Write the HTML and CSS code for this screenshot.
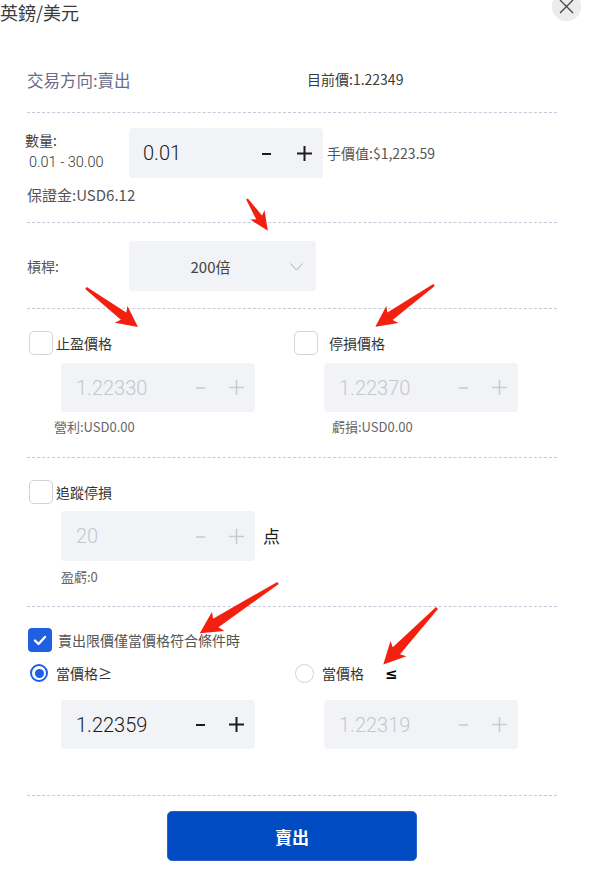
FILE: index.html
```html
<!DOCTYPE html>
<html lang="zh-Hant">
<head>
<meta charset="utf-8">
<title>英鎊/美元</title>
<link rel="stylesheet" href="styles.css">
</head>
<body>
<div class="page">
  <header class="head">
    <div class="title">英鎊/美元</div>
    <div class="close">
      <svg width="29" height="29" viewBox="0 0 29 29"><path d="M8 8 L21 21 M21 8 L8 21" stroke="#444" stroke-width="1.3" fill="none"/></svg>
    </div>
  </header>

  <div class="content">
    <section class="sec sec-dir">
      <div class="dir">交易方向:賣出</div>
      <div class="cur">目前價:1.22349</div>
    </section>

    <section class="sec sec-qty">
      <div class="qty-row">
        <div class="qty-label">
          <div class="ql1">數量:</div>
          <div class="ql2">0.01 - 30.00</div>
        </div>
        <div class="stepper qty">
          <span class="num">0.01</span>
          <svg class="minus" width="9" height="15" viewBox="0 0 9 15"><path d="M0 8 H9" stroke="currentColor" stroke-width="2"/></svg>
          <svg class="plus" width="15" height="15" viewBox="0 0 15 15"><path d="M0 7.5 H15 M7.5 0 V15" stroke="currentColor" stroke-width="2"/></svg>
        </div>
        <div class="value">手價值:$1,223.59</div>
      </div>
      <div class="margin">保證金:USD6.12</div>
    </section>

    <section class="sec sec-lev">
      <div class="lev-label">槓桿:</div>
      <div class="select">
        <span class="sel-text">200倍</span>
        <svg class="chev" width="13" height="8" viewBox="0 0 13 8"><path d="M0.5 0.5 L6.5 7 L12.5 0.5" stroke="#a9adb4" stroke-width="1" fill="none"/></svg>
      </div>
    </section>

    <section class="sec sec-tpsl">
      <div class="col col-tp">
        <div class="check-row">
          <span class="box"></span><span class="cb-label">止盈價格</span>
        </div>
        <div class="stepper disabled">
          <span class="num">1.22330</span>
          <svg class="minus" width="9" height="15" viewBox="0 0 9 15"><path d="M0 8 H9" stroke="currentColor" stroke-width="1.5"/></svg>
          <svg class="plus" width="15" height="15" viewBox="0 0 15 15"><path d="M0 7.5 H15 M7.5 0 V15" stroke="currentColor" stroke-width="1.5"/></svg>
        </div>
        <div class="note">營利:USD0.00</div>
      </div>
      <div class="col col-sl">
        <div class="check-row">
          <span class="box"></span><span class="cb-label">停損價格</span>
        </div>
        <div class="stepper disabled">
          <span class="num">1.22370</span>
          <svg class="minus" width="9" height="15" viewBox="0 0 9 15"><path d="M0 8 H9" stroke="currentColor" stroke-width="1.5"/></svg>
          <svg class="plus" width="15" height="15" viewBox="0 0 15 15"><path d="M0 7.5 H15 M7.5 0 V15" stroke="currentColor" stroke-width="1.5"/></svg>
        </div>
        <div class="note">虧損:USD0.00</div>
      </div>
    </section>

    <section class="sec sec-trail">
      <div class="check-row">
        <span class="box"></span><span class="cb-label">追蹤停損</span>
      </div>
      <div class="trail-row">
        <div class="stepper disabled">
          <span class="num">20</span>
          <svg class="minus" width="9" height="15" viewBox="0 0 9 15"><path d="M0 8 H9" stroke="currentColor" stroke-width="1.5"/></svg>
          <svg class="plus" width="15" height="15" viewBox="0 0 15 15"><path d="M0 7.5 H15 M7.5 0 V15" stroke="currentColor" stroke-width="1.5"/></svg>
        </div>
        <span class="unit">点</span>
      </div>
      <div class="note">盈虧:0</div>
    </section>

    <section class="sec sec-cond">
      <div class="check-row">
        <span class="box checked">
          <svg width="24" height="24" viewBox="0 0 24 24"><path d="M7 12.5 L10.5 16 L17 9" stroke="#fff" stroke-width="2.4" fill="none" stroke-linecap="round" stroke-linejoin="round"/></svg>
        </span>
        <span class="cb-label cond-label">賣出限價僅當價格符合條件時</span>
      </div>
      <div class="radio-grid">
        <div class="radio-cell r1">
          <span class="radio on"><span class="dot"></span></span>
          <span class="r-label">當價格≥</span>
        </div>
        <div class="radio-cell r2">
          <span class="radio"></span>
          <span class="r-label">當價格</span>
          <span class="le">≤</span>
        </div>
      </div>
      <div class="cond-inputs">
        <div class="stepper active">
          <span class="num">1.22359</span>
          <svg class="minus" width="9" height="15" viewBox="0 0 9 15"><path d="M0 8 H9" stroke="currentColor" stroke-width="2"/></svg>
          <svg class="plus" width="15" height="15" viewBox="0 0 15 15"><path d="M0 7.5 H15 M7.5 0 V15" stroke="currentColor" stroke-width="2"/></svg>
        </div>
        <div class="stepper disabled">
          <span class="num">1.22319</span>
          <svg class="minus" width="9" height="15" viewBox="0 0 9 15"><path d="M0 8 H9" stroke="currentColor" stroke-width="1.5"/></svg>
          <svg class="plus" width="15" height="15" viewBox="0 0 15 15"><path d="M0 7.5 H15 M7.5 0 V15" stroke="currentColor" stroke-width="1.5"/></svg>
        </div>
      </div>
    </section>

    <div class="btn-wrap">
      <button class="sell">賣出</button>
    </div>
  </div>
</div>

<svg class="arrows" width="592" height="879" viewBox="0 0 592 879">
  <g fill="#f4200f">
    <polygon transform="translate(247 199) rotate(56.7)" points="0,-1 22,-3.5 19,-8.5 38,0 19,8.5 22,3.5 0,1"/>
    <polygon transform="translate(86 288) rotate(36.9)" points="0,-1.3 47,-4.5 44,-10.5 65,0 44,10.5 47,4.5 0,1.3"/>
    <polygon transform="translate(434 285) rotate(144.6)" points="0,-1.3 54,-4.5 51,-10.5 72,0 51,10.5 54,4.5 0,1.3"/>
    <polygon transform="translate(278 583) rotate(147.3)" points="0,-1.3 74,-5 71,-11.5 93,0 71,11.5 74,5 0,1.3"/>
    <polygon transform="translate(437 608) rotate(133.5)" points="0,-1.3 59,-5 56,-11 78,0 56,11 59,5 0,1.3"/>
  </g>
</svg>
</body>
</html>
```

FILE: styles.css
```css
html, body {
  margin: 0;
  padding: 0;
  background: #fff;
  overflow: hidden;
}
body {
  position: relative;
  width: 592px;
  height: 879px;
  font-family: "Noto Sans CJK TC", "Noto Sans", sans-serif;
  color: #333;
}
.page {
  width: 592px;
}
.head {
  height: 44px;
  display: flex;
  justify-content: space-between;
  align-items: flex-start;
}
.title {
  font-size: 18px;
  line-height: 24px;
  color: #3a3a3a;
}
.close {
  width: 29px;
  height: 29px;
  margin-top: -8px;
  margin-right: 11px;
  border-radius: 50%;
  background: #ececec;
  box-shadow: 0 0 1px rgba(0,0,0,0.06);
}
.close svg { display: block; }

.content {
  padding: 0 35px 0 27px;
}
.sec {
  border-bottom: 1px dashed #c8cadc;
}

/* direction */
.sec-dir {
  display: grid;
  grid-template-columns: 280px 1fr;
  align-items: center;
  padding: 26px 0 22px;
  height: 20px;
}
.dir {
  font-size: 16.5px;
  line-height: 20px;
  color: #6c6a8c;
}
.cur {
  font-size: 14px;
  line-height: 20px;
  color: #3b3b3b;
  margin-top: -2px;
}

/* quantity */
.sec-qty {
  padding: 15px 0 17px;
}
.qty-row {
  display: flex;
  align-items: center;
  height: 50px;
}
.qty-label {
  width: 102px;
  align-self: flex-start;
}
.ql1 {
  margin-top: 2px;
  margin-left: -2px;
  font-size: 14px;
  line-height: 20px;
  color: #444;
}
.ql2 {
  margin-top: 3px;
  margin-left: 2px;
  font-family: Roboto, "Liberation Sans", sans-serif;
  font-weight: 300;
  font-size: 14.5px;
  line-height: 20px;
  color: #333;
}
.value {
  margin-left: 4px;
  font-size: 14px;
  line-height: 20px;
  color: #555;
}
.margin {
  margin-top: 7px;
  font-size: 15px;
  line-height: 20px;
  color: #555;
}

/* stepper */
.stepper {
  box-sizing: border-box;
  width: 194px;
  height: 49px;
  display: flex;
  align-items: center;
  padding-left: 15px;
  background: #f2f3f6;
  border-radius: 4px;
  color: #1c1c1c;
}
.stepper.qty {
  height: 50px;
  padding-left: 14px;
}
.stepper .num {
  flex: 1;
  font-family: Roboto, "Liberation Sans", sans-serif;
  font-weight: 300;
  font-size: 20px;
  line-height: 24px;
  color: #1c1c1c;
}
.stepper .minus {
  display: block;
  margin-right: 24px;
}
.stepper .plus {
  display: block;
  margin-right: 11px;
}
.stepper.qty .minus { margin-right: 26px; }
.stepper.disabled { color: #c7cad0; }
.stepper.disabled .num { color: #c4c7cc; }

/* leverage */
.sec-lev {
  display: flex;
  align-items: center;
  padding: 18px 0 17px;
}
.lev-label {
  width: 102px;
  font-size: 14px;
  line-height: 20px;
  color: #555;
}
.select {
  box-sizing: border-box;
  width: 187px;
  height: 50px;
  display: flex;
  align-items: center;
  background: #f1f3f6;
  border-radius: 4px;
}
.sel-text {
  flex: 1;
  text-align: center;
  font-size: 15px;
  color: #444;
  padding-left: 2px;
}
.chev {
  display: block;
  margin-right: 13px;
  margin-top: 1px;
}

/* checkboxes */
.check-row {
  display: flex;
  align-items: center;
  height: 24px;
  margin-left: 2px;
}
.box {
  box-sizing: border-box;
  width: 24px;
  height: 24px;
  border: 1px solid #d0d3d8;
  border-radius: 5px;
  background: #fff;
  flex: none;
}
.box.checked {
  border: none;
  background: #1f60e2;
  border-radius: 4px;
}
.box.checked svg { display: block; }
.cb-label {
  margin-left: 3px;
  font-size: 14px;
  line-height: 20px;
  color: #333;
}
.note {
  font-size: 13px;
  line-height: 18px;
  color: #666;
}

/* TP / SL */
.sec-tpsl {
  display: grid;
  grid-template-columns: 267px 1fr;
  padding: 22px 0 21px;
}
.sec-tpsl .stepper { margin-top: 8px; }
.sec-tpsl .note { margin-top: 6px; }
.col-tp .stepper { margin-left: 34px; }
.col-tp .note { margin-left: 27px; }
.col-sl .check-row { margin-left: 0; }
.col-sl .cb-label { margin-left: 11px; }
.col-sl .stepper { margin-left: 30px; }
.col-sl .note { margin-left: 38px; }

/* trailing */
.sec-trail {
  padding: 22px 0 20px;
}
.trail-row {
  display: flex;
  align-items: center;
  margin-top: 7px;
  margin-left: 34px;
}
.trail-row .stepper { height: 50px; }
.unit {
  margin-left: 8px;
  font-size: 17px;
  line-height: 20px;
  color: #222;
}
.sec-trail .note {
  margin-top: 7px;
  margin-left: 34px;
}

/* condition */
.sec-cond {
  padding: 21px 0 46px;
}
.sec-cond .check-row { margin-left: 1px; }
.cond-label {
  margin-left: 6px;
  color: #555;
}
.radio-grid {
  display: grid;
  grid-template-columns: 267px 1fr;
  margin-top: 9px;
  height: 24px;
}
.radio-cell {
  display: flex;
  align-items: center;
}
.radio {
  box-sizing: border-box;
  width: 19px;
  height: 19px;
  border-radius: 50%;
  border: 1px solid #d0d3d8;
  display: flex;
  align-items: center;
  justify-content: center;
  flex: none;
}
.radio.on {
  width: 18px;
  height: 18px;
  border: 2px solid #1d5fe6;
}
.radio .dot {
  width: 9px;
  height: 9px;
  border-radius: 50%;
  background: #1d5fe6;
}
.r1 .radio { margin-left: 3px; }
.r2 .radio { margin-left: 1px; }
.r-label {
  margin-left: 8px;
  font-size: 14px;
  line-height: 20px;
  color: #333;
}
.le {
  margin-left: 21px;
  font-family: "DejaVu Sans", sans-serif;
  font-size: 15px;
  font-weight: 700;
  color: #000;
  line-height: 20px;
  margin-top: 2px;
}
.cond-inputs {
  display: grid;
  grid-template-columns: 267px 1fr;
  margin-top: 15px;
}
.cond-inputs .stepper:first-child { margin-left: 34px; }
.cond-inputs .stepper:last-child { margin-left: 30px; }

/* button */
.btn-wrap {
  display: flex;
  justify-content: center;
  padding-top: 15px;
}
.sell {
  width: 250px;
  height: 50px;
  border: 1px solid #2b62c8;
  border-radius: 5px;
  background: #004bc2;
  color: #fff;
  font-family: "Noto Sans CJK TC", sans-serif;
  font-size: 17px;
  font-weight: 700;
  padding: 0;
}

.arrows {
  position: absolute;
  left: 0;
  top: 0;
  pointer-events: none;
}
```
